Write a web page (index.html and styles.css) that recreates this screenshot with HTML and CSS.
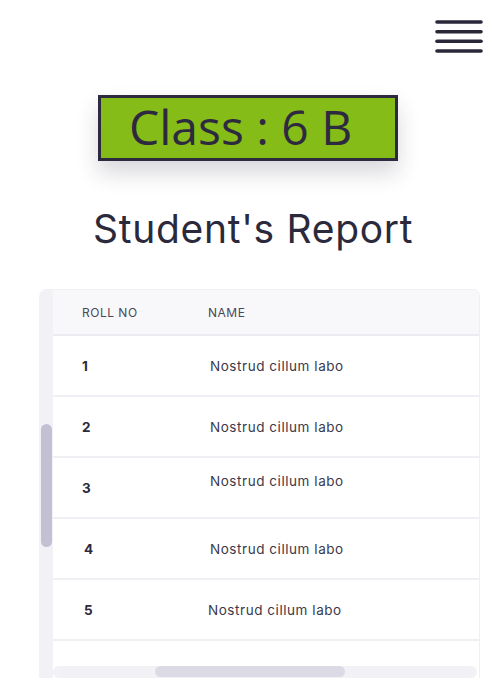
FILE: index.html
```html
<!DOCTYPE html>
<html lang="en">
<head>
<meta charset="utf-8">
<title>Student's Report</title>
<link rel="stylesheet" href="styles.css">
</head>
<body>
<header class="topbar">
  <button class="menu" aria-label="Menu">
    <svg width="48" height="34" viewBox="0 0 48 34" fill="none" stroke="#2a2838" stroke-width="3.6" stroke-linecap="round">
      <line x1="2" y1="2" x2="46" y2="2"/>
      <line x1="2" y1="11.7" x2="46" y2="11.7"/>
      <line x1="2" y1="21.3" x2="46" y2="21.3"/>
      <line x1="2" y1="31" x2="46" y2="31"/>
    </svg>
  </button>
</header>
<div class="class-badge">Class : 6 B</div>
<h1 class="title">Student's Report</h1>
<div class="table-frame">
  <div class="vscroll"><div class="vthumb"></div></div>
  <div class="table-wrap">
    <table class="report">
      <thead>
        <tr><th class="c-roll">ROLL NO</th><th class="c-name">NAME</th></tr>
      </thead>
      <tbody>
        <tr><td class="c-roll">1</td><td class="c-name">Nostrud cillum labo</td></tr>
        <tr><td class="c-roll">2</td><td class="c-name">Nostrud cillum labo</td></tr>
        <tr><td class="c-roll">3</td><td class="c-name high">Nostrud cillum labo</td></tr>
        <tr><td class="c-roll shift">4</td><td class="c-name">Nostrud cillum labo</td></tr>
        <tr><td class="c-roll shift">5</td><td class="c-name back">Nostrud cillum labo</td></tr>
        <tr class="empty"><td></td><td></td></tr>
      </tbody>
    </table>
  </div>
  <div class="hscroll"><div class="hthumb"></div></div>
</div>
</body>
</html>
```
FILE: styles.css
```css
* { box-sizing: border-box; }
html, body { margin: 0; padding: 0; background: #ffffff; }
body { font-family: Inter, "Open Sans", sans-serif; color: #2b2a3c; width: 492px; height: 696px; overflow: hidden; }

.topbar { display: flex; justify-content: flex-end; padding: 20px 9px 0 0; height: 54px; }
.menu { border: 0; background: none; padding: 0; margin: 0; width: 48px; height: 34px; display: block; }
.menu svg { display: block; }

.class-badge {
  margin: 41px 0 0 98px;
  width: 300px;
  height: 66px;
  border: 3px solid #2d2a40;
  background: #86bc17;
  font-family: "Open Sans", sans-serif;
  font-size: 48px;
  line-height: 58px;
  padding-left: 28px;
  color: #2d2a40;
  box-shadow: 0 12px 22px rgba(40, 40, 60, 0.18);
}

.title {
  margin: 44px 0 0 93px;
  font-family: Inter, sans-serif;
  font-weight: 400;
  font-size: 39px;
  line-height: 48px;
  letter-spacing: 0.7px;
  color: #2b2a3c;
  height: 48px;
}

.table-frame {
  margin: 36px 0 0 39px;
  width: 441px;
  height: 389px;
  display: grid;
  grid-template-columns: 14px 1fr;
  grid-template-rows: 1fr 12px;
  border: 1px solid #f0f0f4;
  border-bottom: 0;
  border-left: 0;
  border-radius: 7px 7px 0 0;
  overflow: hidden;
  background: #ffffff;
}
.vscroll { grid-row: 1 / 3; grid-column: 1; background: #f2f1f6; padding: 134px 0 0 2px; border-top-left-radius: 7px; }
.vthumb { width: 11px; height: 123px; background: #c3c0d3; border-radius: 6px; }

.table-wrap { grid-column: 2; grid-row: 1; overflow: hidden; }
.hscroll { grid-column: 2; grid-row: 2; background: #f2f1f6; border-radius: 6px; margin-right: 2px; padding-left: 102px; }
.hthumb { width: 190px; height: 11px; background: #dcdae5; border-radius: 6px; }

.report { border-collapse: collapse; width: 100%; font-family: Inter, sans-serif; }
.report thead tr { background: #f8f8fa; }
.report th {
  height: 45px;
  text-align: left;
  font-weight: 400;
  font-size: 12px;
  letter-spacing: 0.5px;
  color: #4a4858;
  border-bottom: 2px solid #ebebf1;
  padding: 0;
}
.report td {
  height: 61px;
  border-bottom: 2px solid #efeff4;
  font-size: 13.5px;
  letter-spacing: 0.55px;
  padding: 0;
}
.report .c-roll { width: 155px; padding-left: 29px; }
.report td.c-roll { font-weight: 700; color: #2b2a3c; }
.report td.c-name { color: #3b3a4a; padding-left: 2px; }
.report td.high { vertical-align: top; padding-top: 15px; }
.report td.shift { padding-left: 31px; }
.report td.back { padding-left: 0; }
.report tr.empty td { height: 26px; border-bottom: 0; }
```
